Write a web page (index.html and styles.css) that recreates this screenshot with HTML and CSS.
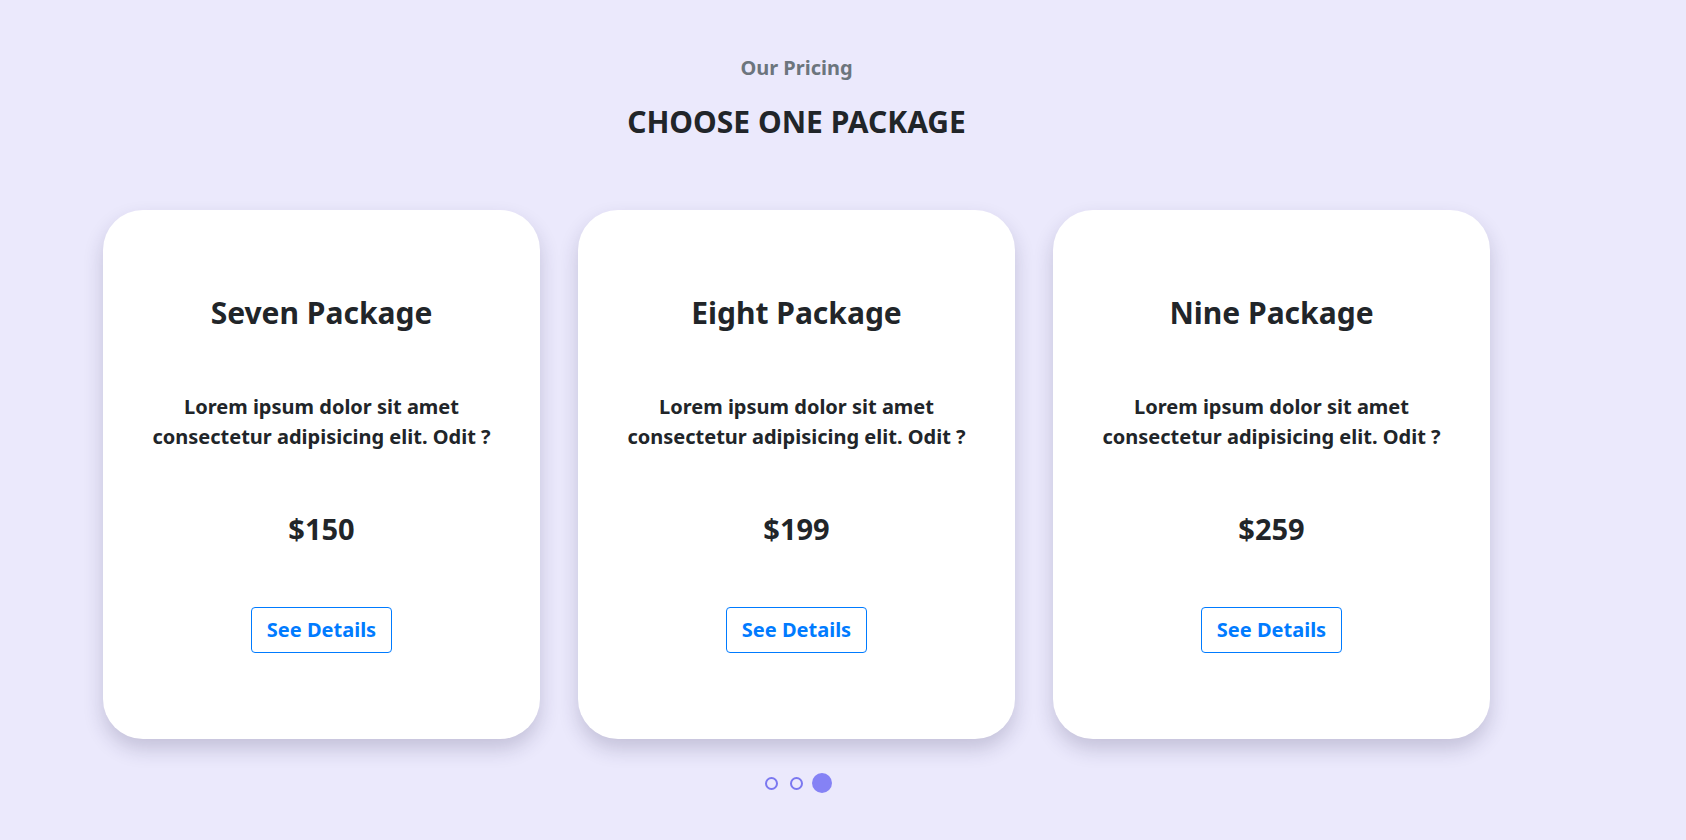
FILE: index.html
```html
<!DOCTYPE html>
<html lang="en">
<head>
<meta charset="utf-8">
<title>Our Pricing</title>
<link rel="stylesheet" href="styles.css">
</head>
<body>
<section class="pricing">
  <header class="pricing-head">
    <p class="eyebrow">Our Pricing</p>
    <h1 class="title">CHOOSE ONE PACKAGE</h1>
  </header>
  <div class="slider">
    <div class="cards">
      <article class="card">
        <h2 class="card-title">Seven Package</h2>
        <p class="card-text">Lorem ipsum dolor sit amet consectetur adipisicing elit. Odit ?</p>
        <p class="card-price">$150</p>
        <a class="btn" href="#">See Details</a>
      </article>
      <article class="card">
        <h2 class="card-title">Eight Package</h2>
        <p class="card-text">Lorem ipsum dolor sit amet consectetur adipisicing elit. Odit ?</p>
        <p class="card-price">$199</p>
        <a class="btn" href="#">See Details</a>
      </article>
      <article class="card">
        <h2 class="card-title">Nine Package</h2>
        <p class="card-text">Lorem ipsum dolor sit amet consectetur adipisicing elit. Odit ?</p>
        <p class="card-price">$259</p>
        <a class="btn" href="#">See Details</a>
      </article>
    </div>
    <div class="dots">
      <span class="dot"></span>
      <span class="dot"></span>
      <span class="dot dot-active"></span>
    </div>
  </div>
</section>
</body>
</html>
```
FILE: styles.css
```css
* { box-sizing: border-box; }
html, body {
  margin: 0;
  padding: 0;
  background: #ebe9fc;
  font-family: "Noto Sans", "Open Sans", sans-serif;
  color: #212529;
}
.pricing {
  width: 1686px;
  height: 840px;
  padding: 53px 0 0 103px;
}
.pricing-head {
  width: 1387px;
  text-align: center;
}
.eyebrow {
  margin: 0;
  font-size: 20px;
  line-height: 30px;
  font-weight: 700;
  color: #6c757d;
}
.title {
  margin: 21px 0 0;
  font-size: 30px;
  line-height: 36px;
  font-weight: 700;
  color: #212529;
}
.slider {
  width: 1387px;
  margin-top: 70px;
}
.cards {
  display: flex;
  gap: 38px;
}
.card {
  width: 437px;
  height: 529px;
  background: #fff;
  border-radius: 40px;
  box-shadow: 0 10px 20px rgba(40, 36, 80, 0.2);
  display: flex;
  flex-direction: column;
  align-items: center;
  padding: 85px 30px 0;
  text-align: center;
}
.card-title {
  margin: 0;
  font-size: 30px;
  line-height: 36px;
  font-weight: 700;
}
.card-text {
  margin: 61px 0 0;
  font-size: 20px;
  line-height: 30px;
  font-weight: 700;
}
.card-price {
  margin: 59px 0 0;
  font-size: 29px;
  line-height: 36px;
  font-weight: 700;
}
.btn {
  margin-top: 60px;
  display: inline-block;
  padding: 7px 15px;
  font-size: 20px;
  line-height: 30px;
  font-weight: 700;
  color: #007bff;
  text-decoration: none;
  border: 1px solid #007bff;
  border-radius: 4px;
}
.dots {
  display: flex;
  justify-content: center;
  align-items: center;
  margin-top: 34px;
  height: 20px;
  padding-left: 4px;
}
.dot {
  width: 13px;
  height: 13px;
  border-radius: 50%;
  border: 2px solid #7b78f0;
  margin: 0 6px;
}
.dot-active {
  width: 20px;
  height: 20px;
  border: none;
  background: #8582f5;
  margin-left: 3px;
}
```
